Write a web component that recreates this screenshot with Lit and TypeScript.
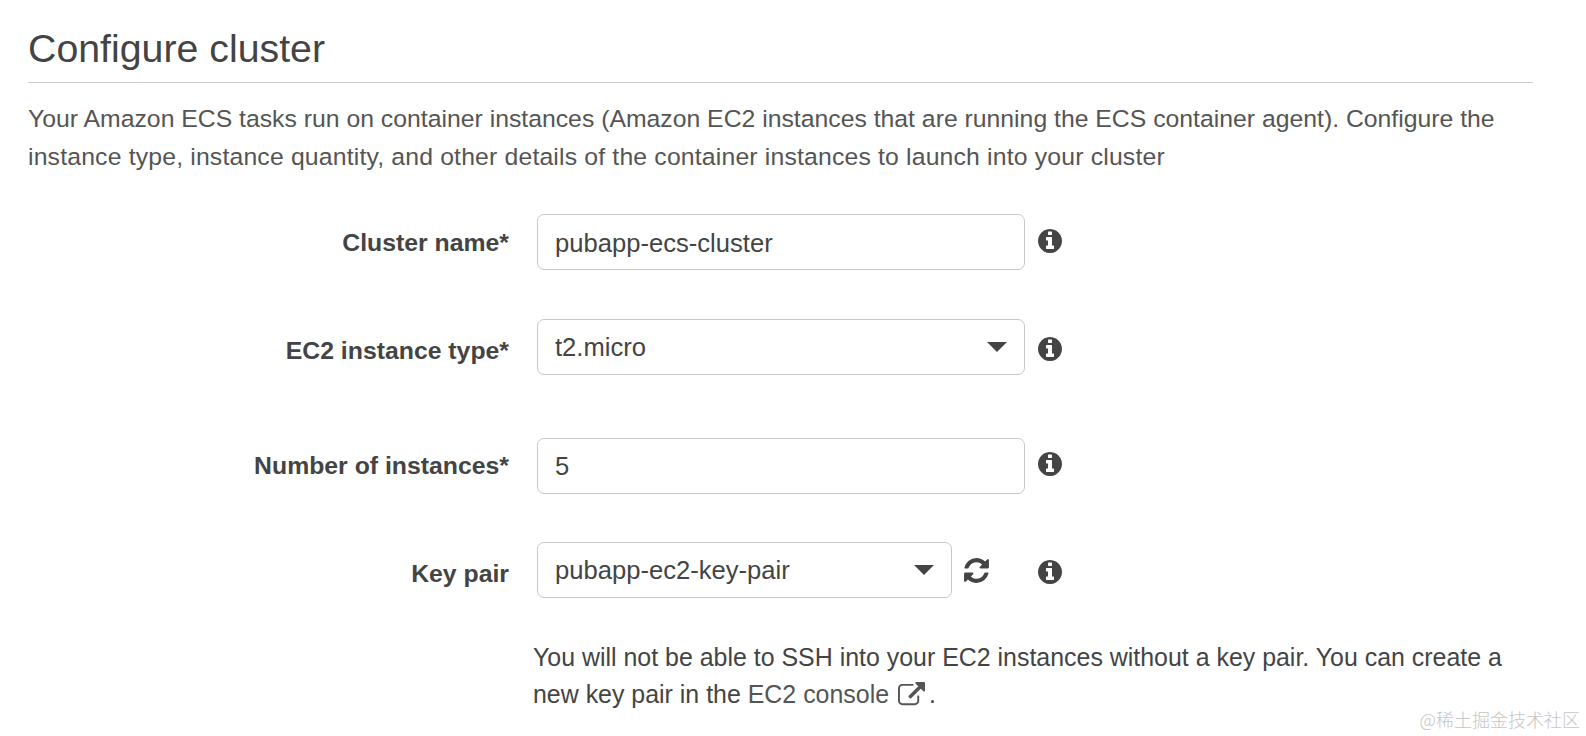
import { LitElement, html, css, svg } from 'lit'
import { customElement } from 'lit/decorators.js'

const INFO = svg`<path d="M1152 1376v-160q0-14-9-23t-23-9h-96v-512q0-14-9-23t-23-9h-320q-14 0-23 9t-9 23v160q0 14 9 23t23 9h96v320h-96q-14 0-23 9t-9 23v160q0 14 9 23t23 9h448q14 0 23-9t9-23zm-128-896v-160q0-14-9-23t-23-9h-192q-14 0-23 9t-9 23v160q0 14 9 23t23 9h192q14 0 23-9t9-23zm640 416q0 209-103 385.500t-279.500 279.500-385.500 103-385.500-103-279.500-279.500-103-385.500 103-385.500 279.500-279.500 385.500-103 385.500 103 279.500 279.500 103 385.500z"/>`
const REFRESH = svg`<path d="M1639 1056q0 5-1 7-64 268-268 434.500t-478 166.500q-146 0-282.500-55t-243.500-157l-129 129q-19 19-45 19t-45-19-19-45v-448q0-26 19-45t45-19h448q26 0 45 19t19 45-19 45l-137 137q71 66 161 102t187 36q134 0 250-65t186-179q11-17 53-117 8-23 30-23h192q13 0 22.500 9.500t9.500 22.500zm25-800v448q0 26-19 45t-45 19h-448q-26 0-45-19t-19-45 19-45l138-138q-148-137-349-137-134 0-250 65t-186 179q-11 17-53 117-8 23-30 23h-199q-13 0-22.500-9.500t-9.500-22.500v-7q65-268 270-434.500t480-166.500q146 0 284 55.500t245 156.500l130-129q19-19 45-19t45 19 19 45z"/>`
const EXTERNAL = svg`<path d="M1408 928v320q0 119-84.500 203.500t-203.500 84.500h-832q-119 0-203.500-84.500t-84.500-203.500v-832q0-119 84.500-203.500t203.500-84.500h704q14 0 23 9t9 23v64q0 14-9 23t-23 9h-704q-66 0-113 47t-47 113v832q0 66 47 113t113 47h832q66 0 113-47t47-113v-320q0-14 9-23t23-9h64q14 0 23 9t9 23zm384-864v512q0 26-19 45t-45 19-45-19l-176-176-652 652q-10 10-23 10t-23-10l-114-114q-10-10-10-23t10-23l652-652-176-176q-19-19-19-45t19-45 45-19h512q26 0 45 19t19 45z"/>`

const icon = (body: unknown, cls: string) =>
  html`<svg class=${cls} viewBox="0 0 1792 1792" fill="currentColor">${body}</svg>`

@customElement('app-root')
export class AppRoot extends LitElement {
  static styles = css`
    :host {
      display: block;
      position: relative;
      width: 1586px;
      height: 736px;
      overflow: hidden;
      background: #fff;
      color: #444;
      font: 24.77px/38px 'Liberation Sans', Arial, sans-serif;
    }
    .page {
      padding: 24px 53px 0 28px;
    }
    h2 {
      margin: 0;
      padding-bottom: 9px;
      font-size: 39.3px;
      font-weight: 400;
      line-height: 49px;
      color: #444;
      border-bottom: 1px solid #ccc;
    }
    .intro {
      margin: 17px 0 0;
      color: #555;
    }
    /* second line runs a little wider than the first in the reference */
    .intro .wide {
      letter-spacing: 0.17px;
    }
    .form {
      display: flex;
      flex-direction: column;
      margin-top: 38px;
    }
    .row {
      display: flex;
      align-items: center;
      height: 56px;
    }
    .row + .row {
      margin-top: var(--gap);
    }
    .r2 {
      --gap: 49px;
    }
    .r3 {
      --gap: 63px;
    }
    .r4 {
      --gap: 48px;
    }
    .label {
      flex: none;
      width: 481px;
      margin-right: 28px;
      text-align: right;
      font-weight: 700;
      font-size: 24.8px;
      color: #444;
    }
    .r1 .label {
      padding-top: 2px;
    }
    .r2 .label,
    .r4 .label {
      padding-top: 8px;
    }
    .field {
      box-sizing: border-box;
      display: flex;
      flex: none;
      align-items: center;
      justify-content: space-between;
      width: 488px;
      height: 56px;
      padding: 0 17px;
      border: 1px solid #c8c8c8;
      border-radius: 7px;
      background: #fff;
      color: #444;
      font: inherit;
      font-size: 25.6px;
      outline: none;
    }
    .r1 .field {
      padding-top: 2px;
    }
    .r4 .field {
      width: 415px;
    }
    .caret {
      width: 0;
      height: 0;
      border-left: 10px solid transparent;
      border-right: 10px solid transparent;
      border-top: 10px solid #444;
    }
    .info {
      width: 28px;
      height: 28px;
      flex: none;
      margin-left: 11px;
      color: #444;
    }
    .r1 .info {
      margin-top: -3px;
    }
    .r2 .info {
      margin-top: 3px;
    }
    .r3 .info {
      margin-top: -5px;
    }
    .r4 .info {
      margin: 3px 0 0;
    }
    .refresh {
      width: 29px;
      height: 29px;
      flex: none;
      margin: 0 45px 0 10px;
      color: #444;
    }
    .help {
      margin: 41px 0 0 505px;
      font-size: 24.93px;
      line-height: 36.5px;
      color: #444;
    }
    .help a {
      color: #555;
      text-decoration: none;
    }
    .ext {
      width: 27px;
      height: 27px;
      margin: 0 4px 0 2px;
      vertical-align: -6px;
      color: #555;
    }
    .watermark {
      position: absolute;
      right: 6px;
      bottom: 6px;
      font: 300 18px/22px 'Noto Sans CJK SC', sans-serif;
      color: #c6c6c6;
    }
  `

  render() {
    return html`
      <div class="page">
        <h2>Configure cluster</h2>
        <p class="intro">
          Your Amazon ECS tasks run on container instances (Amazon EC2 instances that are running the ECS container agent). Configure the
          <span class="wide">instance type, instance quantity, and other details of the container instances to launch into your cluster</span>
        </p>
        <div class="form">
          <div class="row r1">
            <label class="label">Cluster name*</label>
            <input class="field" .value=${'pubapp-ecs-cluster'} />
            ${icon(INFO, 'info')}
          </div>
          <div class="row r2">
            <label class="label">EC2 instance type*</label>
            <div class="field">t2.micro<span class="caret"></span></div>
            ${icon(INFO, 'info')}
          </div>
          <div class="row r3">
            <label class="label">Number of instances*</label>
            <input class="field" .value=${'5'} />
            ${icon(INFO, 'info')}
          </div>
          <div class="row r4">
            <label class="label">Key pair</label>
            <div class="field">pubapp-ec2-key-pair<span class="caret"></span></div>
            ${icon(REFRESH, 'refresh')}
            ${icon(INFO, 'info')}
          </div>
        </div>
        <p class="help">
          You will not be able to SSH into your EC2 instances without a key pair. You can create a
          new key pair in the <a href="#">EC2 console ${icon(EXTERNAL, 'ext')}</a>.
        </p>
      </div>
      <div class="watermark">@稀土掘金技术社区</div>
    `
  }
}
